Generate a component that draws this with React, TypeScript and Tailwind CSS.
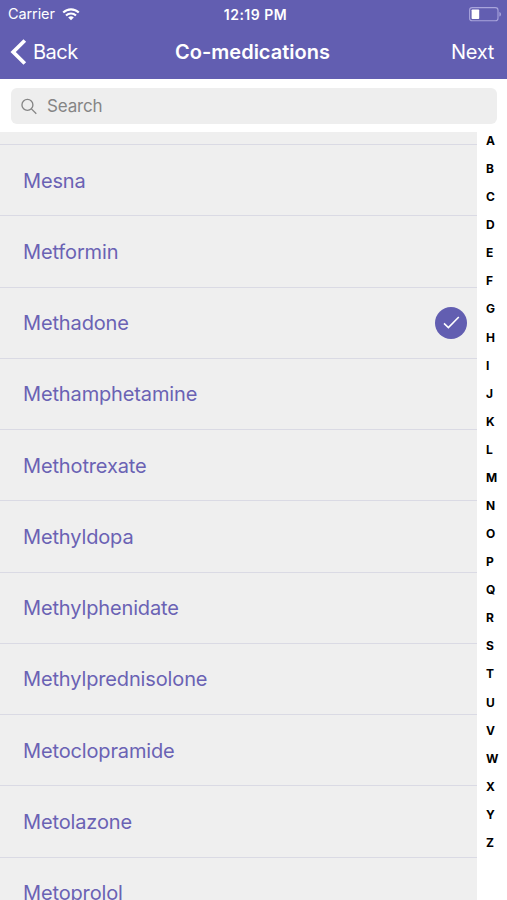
import { useState } from "react";

const medications = [
  "Mesna",
  "Metformin",
  "Methadone",
  "Methamphetamine",
  "Methotrexate",
  "Methyldopa",
  "Methylphenidate",
  "Methylprednisolone",
  "Metoclopramide",
  "Metolazone",
  "Metoprolol",
];

const letters = "ABCDEFGHIJKLMNOPQRSTUVWXYZ".split("");

function WifiIcon() {
  return (
    <svg width="18" height="13" viewBox="0 0 18 13" fill="none" stroke="white">
      <path d="M1.2 4.6a11 11 0 0 1 15.6 0" strokeWidth="2.1" />
      <path d="M4 7.5a7.1 7.1 0 0 1 10 0" strokeWidth="2.1" />
      <path d="M9 12.3 6.2 9.6a4 4 0 0 1 5.6 0Z" fill="white" stroke="none" />
    </svg>
  );
}

function BatteryIcon() {
  return (
    <svg width="33" height="15" viewBox="0 0 33 15" fill="none">
      <rect x="0.6" y="0.6" width="28.4" height="13.2" rx="2.6" stroke="#a9a5dc" strokeWidth="1.1" />
      <rect x="2.6" y="2.4" width="7.6" height="9.6" rx="0.8" fill="white" />
      <path d="M30.4 5v4.6c1-.4 1.6-1.2 1.6-2.3S31.4 5.4 30.4 5Z" fill="#a9a5dc" />
    </svg>
  );
}

function Header() {
  return (
    <header className="h-[79px] bg-[#625eb1] text-white">
      <div className="grid h-7 grid-cols-3 items-center pl-2 pr-[5px]">
        <div className="flex items-center gap-[7px]">
          <span className="text-[14.5px] tracking-[-0.1px]">Carrier</span>
          <WifiIcon />
        </div>
        <span className="pl-px text-center text-[14px] font-semibold tracking-[0.5px]">12:19 PM</span>
        <div className="flex justify-end">
          <BatteryIcon />
        </div>
      </div>
      <div className="grid h-12 grid-cols-[1fr_auto_1fr] items-center pl-[10px] pr-[13px] text-xl">
        <button type="button" className="flex items-center gap-[6px]">
          <svg width="17" height="26" viewBox="0 0 17 26" fill="none" stroke="white" strokeWidth="3.8">
            <path d="M14.8 1.5 3.2 13l11.6 11.5" />
          </svg>
          <span className="tracking-[-0.5px]">Back</span>
        </button>
        <h1 className="pl-px font-semibold">Co-medications</h1>
        <button type="button" className="text-right tracking-[-0.3px]">Next</button>
      </div>
    </header>
  );
}

export default function App() {
  const [selected, setSelected] = useState(["Methadone"]);

  function toggle(name: string) {
    setSelected((current) =>
      current.includes(name) ? current.filter((item) => item !== name) : [...current, name]
    );
  }

  return (
    <main className="flex h-[900px] w-[507px] flex-col overflow-hidden bg-white font-[Inter,sans-serif]">
      <Header />

      <div className="h-[53px] shrink-0 pl-[11px] pr-[10px] pt-[9px]">
        <label className="flex h-[36px] items-center gap-[10px] rounded-md bg-[#eeeeee] pl-[10px] text-[#858585]">
          <svg width="17" height="17" viewBox="0 0 17 17" fill="none" stroke="#858585" strokeWidth="1.4">
            <circle cx="6.8" cy="6.8" r="5.8" />
            <path d="m11 11 5.2 5.2" />
          </svg>
          <input
            type="text"
            placeholder="Search"
            className="w-full bg-transparent pt-[2px] text-[17px] tracking-[-0.2px] outline-none placeholder:text-[#858585]"
          />
        </label>
      </div>

      <div className="flex min-h-0 flex-1">
        <ul className="w-[477px] overflow-hidden bg-[#efefef] pt-[12px]">
          {medications.map((name) => (
            <li
              key={name}
              onClick={() => toggle(name)}
              className="flex h-[71.25px] items-center justify-between border-t border-[#dadae4] pl-[23px] pr-[10px] text-xl text-[#6a62b4]"
            >
              <span className="pt-px tracking-[-0.14px]">{name}</span>
              {selected.includes(name) && (
                <span className="flex size-8 items-center justify-center rounded-full bg-[#625eb1]">
                  <svg width="17" height="13" viewBox="0 0 17 13" fill="none" stroke="white" strokeWidth="1.6">
                    <path d="m1 7.4 4.4 4.2L15.8 1" />
                  </svg>
                </span>
              )}
            </li>
          ))}
        </ul>

        <nav className="flex flex-1 flex-col bg-white pl-[9px] pt-px">
          {letters.map((letter) => (
            <button
              key={letter}
              type="button"
              className="flex h-[28.08px] items-start text-left text-[12px] font-bold leading-[16px] text-black"
            >
              {letter}
            </button>
          ))}
        </nav>
      </div>
    </main>
  );
}
